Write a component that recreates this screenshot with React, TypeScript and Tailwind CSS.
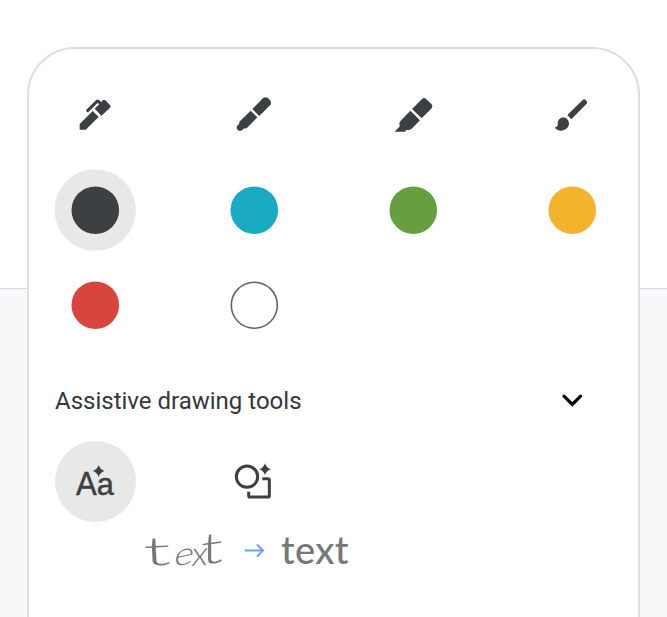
import type { ReactNode } from "react";

function Icon({ box, children }: { box: string; children: ReactNode }) {
  return (
    <svg viewBox={box} className="size-[81px]" fill="#3c4043">
      {children}
    </svg>
  );
}

function Swatch({ color, selected = false, outline = false }: { color: string; selected?: boolean; outline?: boolean }) {
  return (
    <button className="size-[81px]">
      <svg viewBox="0 0 81 81" className="size-[81px] overflow-visible">
        {selected && <circle cx="40.2" cy="40" r="40.8" fill="#e8e8e8" />}
        <circle
          cx="40.3"
          cy="40.2"
          r={outline ? 23 : 23.8}
          fill={color}
          stroke={outline ? "#5f6368" : "none"}
          strokeWidth="1.6"
        />
      </svg>
    </button>
  );
}

const SPARK = "M0 -18Q4 -4 18 0Q4 4 0 18Q-4 4 -18 0Q-4 -4 0 -18Z";

export default function App() {
  return (
    <div className="grid h-[617px] w-[667px] overflow-hidden bg-white font-[Roboto,sans-serif]">
      <div className="col-start-1 row-start-1 flex h-[617px] flex-col">
        <div className="h-[288px]" />
        <div className="flex-1 border-t border-[#d7d9dd] bg-[#f7f8fa]" />
      </div>

      <main className="z-10 col-start-1 row-start-1 mt-[47px] ml-[27px] h-[640px] w-[613px] rounded-[48px] border-2 border-[#dddee3] bg-white pt-[26px] pl-[26px]">
        <div className="grid grid-cols-[repeat(4,81px)] gap-x-[78px] gap-y-3.5">
          <Icon box="-30 -30 243 243">
            <path d="M44 134V117L83 78L101 96L62 134Z" />
            <path d="M90 70L107 53L113 46Q117 43 121 46L135 60Q139 64 135 68L108 94L88 75Z" />
            <path d="M68 77L96 49Q98 47 100 49L108 57" fill="none" stroke="#3c4043" strokeWidth="9" strokeLinecap="round" />
            <path d="M85 71L107 93" stroke="#fff" strokeWidth="5" />
          </Icon>
          <Icon box="-30 -30 243 243">
            <path d="M85 72L117 40Q124 34 132 40L138 46Q144 54 138 61L106 93Z" />
            <path d="M80 77L100 97L71 127Q66 132 60 130L56 134Q49 140 42 136Q36 130 39 123L46 116Q44 111 49 107Z" />
          </Icon>
          <Icon box="-33 -30 243 243">
            <path d="M84 72L114 42Q120 36 126 42L143 58Q148 64 143 70L113 100Z" />
            <path d="M79 77L108 106L82 132Q75 137 68 134L62 140H32L48 123Q43 116 50 107Z" />
          </Icon>
          <Icon box="-30 -30 243 243">
            <path d="M76 90L122 45Q127 41 131 45L134 48Q137 52 134 56L88 103Z" />
            <path d="M38 127Q49 126 47 115C49 92 79 92 81 115C80 139 48 144 38 127Z" />
          </Icon>

          <Swatch color="#3c4043" selected />
          <Swatch color="#19abc1" />
          <Swatch color="#689f3e" />
          <Swatch color="#f3b32c" />
          <Swatch color="#d9453d" />
          <Swatch color="#ffffff" outline />
        </div>

        <button className="mt-[35px] mb-5 flex h-10 w-[528px] items-center justify-between text-left">
          <span className="text-[24px] whitespace-nowrap text-[#34373b]">Assistive drawing tools</span>
          <svg className="h-6 w-6" viewBox="0 0 24 24" fill="none" stroke="#000" strokeWidth="3.2" strokeLinecap="round">
            <path d="M5 7.2L13.3 15.5L21.6 7.2" />
          </svg>
        </button>

        <div className="grid grid-cols-[repeat(4,81px)] gap-x-[78px]">
          <button className="rounded-full bg-[#e8e8e8]">
            <Icon box="30 32 243 243">
              <text transform="translate(93 195) scale(.95 1)" fontSize="98" fontFamily="Liberation Sans, sans-serif" stroke="#3c4043" strokeWidth="1.5">A</text>
              <text transform="translate(155 195) scale(.97 1)" fontSize="95" fontFamily="Liberation Sans, sans-serif" stroke="#3c4043" strokeWidth="1.5">a</text>
              <path transform="translate(161 122)" d={SPARK} stroke="#e8e8e8" strokeWidth="3" paintOrder="stroke" />
            </Icon>
          </button>
          <button>
            <Icon box="-18 -28 243 243">
              <circle cx="81" cy="79" r="32" fill="none" stroke="#3c4043" strokeWidth="9" />
              <path d="M127 85H144Q148 85 148 89V136Q148 140 144 140H90Q86 140 86 136V124" fill="none" stroke="#3c4043" strokeWidth="9" />
              <path transform="translate(135 57)" d={SPARK} />
            </Icon>
          </button>
        </div>

        <div className="flex h-[58px] items-center pl-[92px]">
          <svg className="h-[50px] w-[78px] overflow-visible" viewBox="0 0 78 50" fill="#777" fontFamily="Lato, sans-serif" fontWeight="300">
            <text transform="translate(-3 40) rotate(-3) scale(2 1)" fontSize="40">t</text>
            <text transform="translate(26 41) rotate(-12) skewX(-20) scale(1.3 1)" fontSize="30">e</text>
            <text transform="translate(44 40) rotate(-3) skewX(-8)" fontSize="34">x</text>
            <text transform="translate(54 39) rotate(-8) skewX(-8) scale(1.5 1)" fontSize="43">t</text>
          </svg>
          <svg className="ml-5 h-5 w-5" viewBox="0 0 20 20" fill="none" stroke="#6ba1f8" strokeWidth="2">
            <path d="M0 9.5H18M12 3.5L18 9.5L12 15.5" />
          </svg>
          <span className="-mt-1 ml-4 font-[Lato,sans-serif] text-[38px] leading-none font-medium tracking-[0.4px] text-[#757779]">text</span>
        </div>
      </main>
    </div>
  );
}
